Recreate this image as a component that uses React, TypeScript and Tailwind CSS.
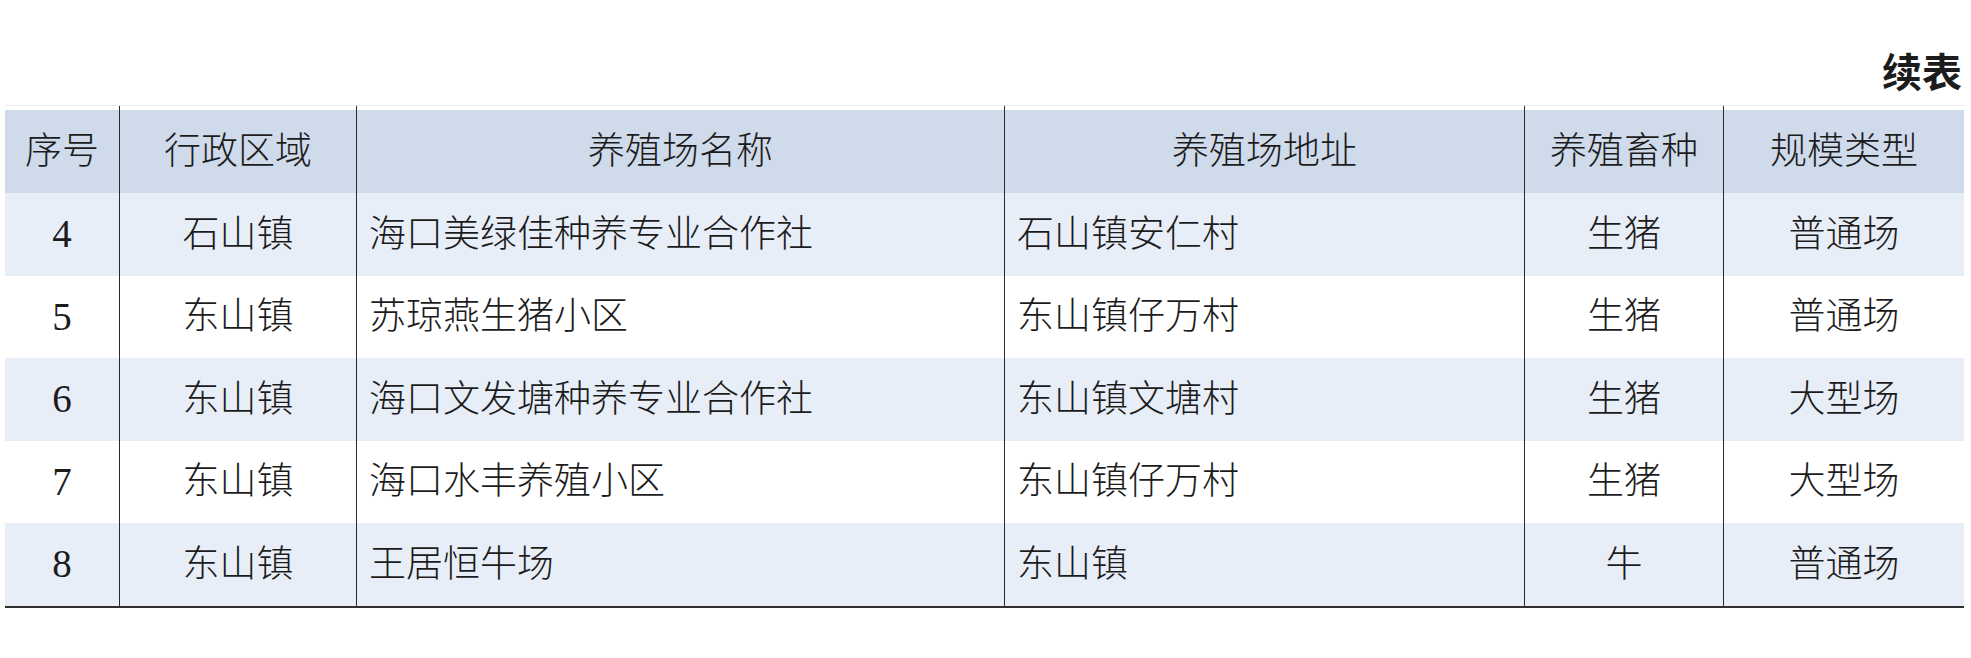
const headers = ["序号", "行政区域", "养殖场名称", "养殖场地址", "养殖畜种", "规模类型"];

const rows = [
  ["4", "石山镇", "海口美绿佳种养专业合作社", "石山镇安仁村", "生猪", "普通场"],
  ["5", "东山镇", "苏琼燕生猪小区", "东山镇仔万村", "生猪", "普通场"],
  ["6", "东山镇", "海口文发塘种养专业合作社", "东山镇文塘村", "生猪", "大型场"],
  ["7", "东山镇", "海口水丰养殖小区", "东山镇仔万村", "生猪", "大型场"],
  ["8", "东山镇", "王居恒牛场", "东山镇", "牛", "普通场"],
];

// columns that hold free text are left aligned, the rest centred
const leftCols = [2, 3];

const cols = "grid-cols-[114px_237px_648px_520px_199px_241px]";

export default function App() {
  return (
    <div className="w-[1971px] h-[658px] bg-white text-[#1c1c1c] [font-family:'Liberation_Serif','Noto_Sans_CJK_SC',serif]">
      <div className="h-[105px] flex items-end justify-end pr-[9px] pb-[15px]">
        <span className="text-[40px] leading-none font-bold [font-family:'Noto_Sans_CJK_SC',sans-serif]">续表</span>
      </div>

      <div className="ml-[5px] w-[1959px] border-t border-[#ececec]">
        <div className={`grid ${cols} h-[87px]`}>
          {headers.map((h, i) => (
            <div key={h} className={`flex flex-col ${i > 0 ? "border-l-[1.5px] border-[#2a2a2a]" : ""}`}>
              <div className="h-[4px] bg-white" />
              <div className="flex-1 bg-[#cfdaeb] flex items-center justify-center text-[37px] font-light">
                {h}
              </div>
            </div>
          ))}
        </div>

        {rows.map((r, ri) => (
          <div key={r[0]} className={`grid ${cols} h-[82.6px] ${ri % 2 === 0 ? "bg-[#e8eef7]" : "bg-white"}`}>
            {r.map((c, ci) => (
              <div
                key={ci}
                className={`flex items-center ${leftCols.includes(ci) ? "justify-start pl-[12px]" : "justify-center"} ${ci > 0 ? "border-l-[1.5px] border-[#2a2a2a]" : ""} ${ci === 0 ? "text-[39px]" : "text-[37px] font-light"}`}
              >
                {c}
              </div>
            ))}
          </div>
        ))}
        <div className="h-[2px] bg-[#2f2f2f]" />
      </div>
    </div>
  );
}
